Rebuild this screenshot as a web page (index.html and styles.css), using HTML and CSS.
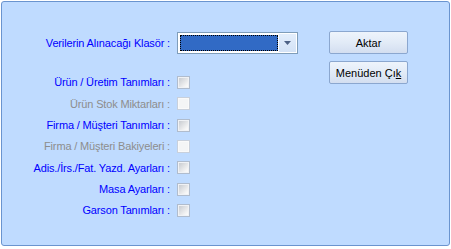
FILE: index.html
```html
<!DOCTYPE html>
<html lang="tr">
<head>
    <meta charset="UTF-8">
    <title>Veri Aktarımı</title>
    <link rel="stylesheet" href="styles.css">
</head>
<body>
    <div class="panel">
        <div class="form">
            <label class="label">Verilerin Alınacağı Klasör :</label>
            <div class="combo">
                <div class="combo-value"><span class="focus"></span></div>
                <div class="combo-arrow">
                    <svg width="7" height="4" viewBox="0 0 7 4"><path d="M0 0H7L3.5 4Z" fill="#4d6185"/></svg>
                </div>
            </div>

            <div class="spacer"></div>

            <label class="label">Ürün / Üretim Tanımları :</label>
            <span class="check"></span>

            <label class="label disabled">Ürün Stok Miktarları :</label>
            <span class="check disabled"></span>

            <label class="label">Firma / Müşteri Tanımları :</label>
            <span class="check"></span>

            <label class="label disabled">Firma / Müşteri Bakiyeleri :</label>
            <span class="check disabled"></span>

            <label class="label">Adis./İrs./Fat. Yazd. Ayarları :</label>
            <span class="check"></span>

            <label class="label">Masa Ayarları :</label>
            <span class="check"></span>

            <label class="label">Garson Tanımları :</label>
            <span class="check"></span>
        </div>

        <div class="buttons">
            <button class="btn">Aktar</button>
            <button class="btn">Menüden Çı<u>k</u></button>
        </div>
    </div>
</body>
</html>
```

FILE: styles.css
```css
body {
    margin: 0;
    background: #ffffff;
    font-family: "Liberation Sans", Arial, sans-serif;
    font-size: 11px;
}
.panel {
    margin: 1px;
    height: 245px;
    box-sizing: border-box;
    border: 1px solid #6a94cf;
    border-radius: 3px;
    background: #bfdbff;
    display: flex;
    align-items: flex-start;
    padding-top: 30px;
}
.form {
    display: grid;
    grid-template-columns: 168px 121px;
    grid-template-rows: 22px 17.8px;
    grid-auto-rows: 21.33px;
    column-gap: 7px;
    align-items: center;
}
.spacer {
    grid-column: 1 / -1;
}
.label {
    text-align: right;
    color: #0000ff;
    white-space: nowrap;
    font-size: 11px;
    letter-spacing: -0.15px;
}
.label.disabled {
    color: #8d8d8d;
}
.combo {
    height: 22px;
    box-sizing: border-box;
    border: 1px solid #7f9db9;
    background: #ffffff;
    display: flex;
    padding: 1px;
}
.combo-value {
    flex: 1;
    padding: 1px;
}
.focus {
    display: block;
    height: 100%;
    box-sizing: border-box;
    background: #316ac5;
    border: 1px dotted #000;
}
.combo-arrow {
    width: 17px;
    background: linear-gradient(#e3eefc, #d3e2f6);
    display: flex;
    align-items: center;
    justify-content: center;
}
.check {
    width: 13px;
    height: 13px;
    box-sizing: border-box;
    border: 1px solid #b0bccd;
    background: linear-gradient(135deg, #c2c6cc, #f5f5f5 75%, #ffffff);
    box-shadow: inset 0 0 0 1px #f0f2f5;
}
.check.disabled {
    border-color: #c8d0dc;
    background: #f4f5f6;
    box-shadow: inset 0 0 0 1px #fafafa;
}
.buttons {
    margin-left: 31px;
    margin-top: -1px;
    display: flex;
    flex-direction: column;
    gap: 7px;
}
.btn {
    width: 79px;
    height: 23px;
    border: 1px solid #8ba7cf;
    border-radius: 2px;
    background: linear-gradient(#eef4fc 0%, #e2ebf7 50%, #d3def0 100%);
    font-family: "Liberation Sans", Arial, sans-serif;
    font-size: 11px;
    color: #000;
    padding: 0;
}
```
